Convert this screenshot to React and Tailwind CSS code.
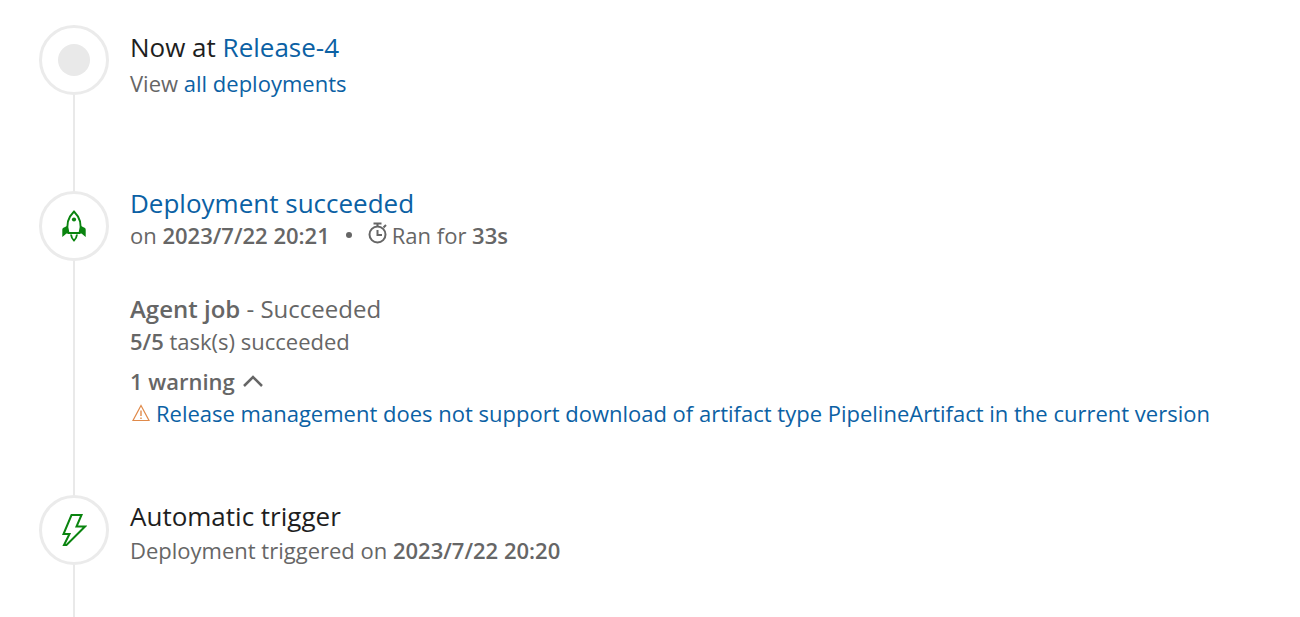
const Rocket = () => (
    <svg width="24" height="32" viewBox="0 0 24 32" fill="none" aria-hidden="true">
        <path d="M6.500 23C4 15.500 5.500 8 12 1.500C18.500 8 20 15.500 17.500 23Z" stroke="#0a840f" strokeWidth="1.900" />
        <circle cx="12" cy="9.500" r="2.100" fill="#0a840f" />
        <path d="M5 16L1 18Q0.300 18.500 0.300 19.500V27L4.500 23.500H7ZM19 16L23 18Q23.700 18.500 23.700 19.500V27L19.500 23.500H17Z" fill="#0a840f" />
        <path d="M9 24.500Q9.500 28.500 12 30.500Q14.500 28.500 15 24.500" stroke="#0a840f" strokeWidth="1.900" />
    </svg>
);

const Bolt = () => (
    <svg width="26" height="34" viewBox="0 0 26 34" fill="none" aria-hidden="true">
        <path d="M10.500 2H20.500L15.500 13.500H24L5.500 32H3L8.500 21H2.500Z" stroke="#0a840f" strokeWidth="2" />
    </svg>
);

const Stopwatch = () => (
    <svg className="mb-1" width="20" height="22" viewBox="0 0 20 22" fill="none" stroke="#666666" aria-hidden="true">
        <circle cx="9.500" cy="12.500" r="8" strokeWidth="2" />
        <path d="M5.500 1.500H13.500M9.500 2V5M15.500 5.500L18 3M9.500 8V13H14" strokeWidth="2" />
    </svg>
);

const Warning = () => (
    <svg width="18" height="18" viewBox="0 0 18 18" fill="none" stroke="#e08a4a" aria-hidden="true">
        <path d="M9 1.500L17 16.500H1Z" strokeWidth="1.200" />
        <path d="M9 6.500V12M9 13.500V15" strokeWidth="1.400" />
    </svg>
);

const Chevron = () => (
    <svg width="20" height="12" viewBox="0 0 20 12" fill="none" stroke="#666666" aria-hidden="true">
        <path d="M1 11L10 2L19 11" strokeWidth="2.500" />
    </svg>
);

function TimelineItem({ icon, first, children }) {
    return (
        <li className="flex gap-[21px]">
            <div className="flex w-[70px] shrink-0 flex-col items-center">
                <div className={first ? "h-1.5" : "h-1.5 w-0.5 bg-[#e9e9e9]"} />
                <div className="flex size-[70px] shrink-0 items-center justify-center rounded-full border-3 border-[#ebebeb]">
                    {icon}
                </div>
                <div className="w-0.5 grow bg-[#e9e9e9]" />
            </div>
            {children}
        </li>
    );
}

const TITLE = "text-[26px] leading-8";
const LINK = "text-[#0b61a4] hover:underline";

export default function App() {
    return (
        <main className="min-h-screen bg-white pt-[19px] pr-6 pl-[39px] font-['Open_Sans','Noto_Sans',sans-serif] text-[22px] leading-8 text-[#666666]">
            <ol>
                <TimelineItem first icon={<span className="size-8 rounded-full bg-[#e9e9e9]" />}>
                    <div className="pt-3 pb-[86px]">
                        <h2 className={`${TITLE} text-[#1e1e1e]`}>
                            Now at <a href="#release" className={LINK}>Release-4</a>
                        </h2>
                        <p className="mt-1">
                            View <a href="#deployments" className={LINK}>all deployments</a>
                        </p>
                    </div>
                </TimelineItem>

                <TimelineItem icon={<Rocket />}>
                    <div className="pt-0.5 pb-[60px]">
                        <h2 className={TITLE}>
                            <a href="#summary" className={LINK}>Deployment succeeded</a>
                        </h2>
                        <div className="flex items-center">
                            <p>on <time className="font-semibold">2023/7/22 20:21</time></p>
                            <span className="mx-4 size-1.5 rounded-full bg-[#666666]" />
                            <p className="flex items-center gap-1">
                                <Stopwatch />
                                <span>Ran for <b className="font-semibold">33s</b></span>
                            </p>
                        </div>

                        <h3 className="mt-[42px] text-2xl leading-8">
                            <b className="font-semibold">Agent job</b> - Succeeded
                        </h3>
                        <p><b className="font-semibold">5/5</b> task(s) succeeded</p>
                        <button type="button" aria-expanded="true" className="mt-2 flex items-center gap-2 font-semibold">
                            1 warning
                            <Chevron />
                        </button>
                        <a href="#warning" className={`${LINK} ml-0.5 flex items-center gap-1.5`}>
                            <Warning />
                            Release management does not support download of artifact type PipelineArtifact in the current version
                        </a>
                    </div>
                </TimelineItem>

                <TimelineItem icon={<Bolt />}>
                    <div className="pt-[11px] pb-[51px]">
                        <h2 className={`${TITLE} text-[#1e1e1e]`}>Automatic trigger</h2>
                        <p className="mt-0.5">
                            Deployment triggered on <time className="font-semibold">2023/7/22 20:20</time>
                        </p>
                    </div>
                </TimelineItem>
            </ol>
        </main>
    );
}
